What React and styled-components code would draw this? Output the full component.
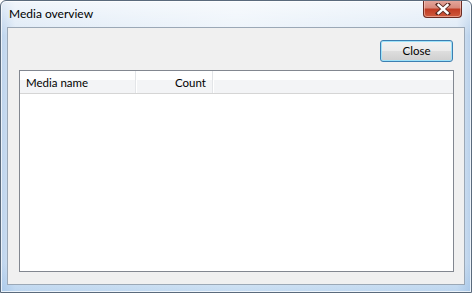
import React from "react";
import styled, { createGlobalStyle } from "styled-components";

const Global = createGlobalStyle`
  html, body { margin: 0; padding: 0; background: #ffffff; }
  body { font-family: Lato, "Noto Sans", sans-serif; }
`;

const Window = styled.div`
  box-sizing: border-box;
  width: 472px;
  height: 293px;
  display: flex;
  flex-direction: column;
  border: 1px solid #5a6a7c;
  border-radius: 6px 6px 0 0;
  background:
    linear-gradient(to bottom, rgba(255,255,255,0.6), rgba(255,255,255,0) 12%, rgba(255,255,255,0) 90%, rgba(150,190,230,0.45) 100%),
    linear-gradient(to right, #bcd3ec 0%, #dde9f6 3%, #ecf3fa 50%, #dde9f6 97%, #b8d0ea 100%);
  box-shadow: inset 0 0 0 1px rgba(255,255,255,0.7);
  overflow: hidden;
`;

const TitleBar = styled.div`
  height: 26px;
  display: flex;
  align-items: flex-start;
  padding-left: 8px;
`;

const Title = styled.div`
  margin-top: 5px;
  font-size: 12px;
  color: #000;
  line-height: 16px;
  flex: 1;
`;

const CloseX = styled.div`
  width: 39px;
  height: 18px;
  margin-top: -1px;
  margin-right: 9px;
  box-sizing: border-box;
  border: 1px solid #6b2b22;
  border-top: none;
  border-radius: 0 0 4px 4px;
  background: linear-gradient(to bottom, #e6a99f 0%, #d88a7c 45%, #c13c24 55%, #cf5b3e 100%);
  box-shadow: inset 0 0 0 1px rgba(255,220,210,0.5);
  display: flex;
  align-items: center;
  justify-content: center;
`;

const Client = styled.div`
  flex: 1;
  margin: 0 6px 7px 6px;
  border: 1px solid #9ba8b6;
  background: #f0f0f0;
  display: flex;
  flex-direction: column;
  padding: 12px 10px 12px 11px;
  min-height: 0;
`;

const ButtonRow = styled.div`
  display: flex;
  justify-content: flex-end;
  margin-bottom: 8px;
`;

const Button = styled.button`
  box-sizing: border-box;
  width: 73px;
  height: 22px;
  margin-right: 1px;
  padding: 0;
  border: 1px solid #3c7fb1;
  border-radius: 3px;
  background: linear-gradient(to bottom, #f2f2f2 0%, #ebebeb 48%, #dddddd 52%, #cfcfcf 100%);
  box-shadow: inset 0 0 0 1px #9ee2f9;
  font-family: Lato, "Noto Sans", sans-serif;
  font-size: 11.5px;
  color: #000;
  line-height: 18px;
`;

const ListView = styled.div`
  flex: 1;
  border: 1px solid #828790;
  background: #ffffff;
  display: flex;
  flex-direction: column;
`;

const Header = styled.div`
  display: flex;
  height: 22px;
  border-bottom: 1px solid #d5d5d5;
  background: linear-gradient(to bottom, #ffffff 0%, #ffffff 40%, #f3f4f6 42%, #f3f4f6 100%);
`;

const Column = styled.div`
  box-sizing: border-box;
  width: ${(p) => p.$w}px;
  flex: ${(p) => (p.$grow ? 1 : "none")};
  display: flex;
  align-items: center;
  justify-content: ${(p) => (p.$right ? "flex-end" : "flex-start")};
  padding: ${(p) => (p.$right ? "1px 6px 0 0" : "1px 0 0 6px")};
  border-right: ${(p) => (p.$grow ? "none" : "1px solid #e3e5e8")};
  box-shadow: ${(p) => (p.$grow ? "none" : "1px 0 0 #ffffff")};
  font-size: 11.5px;
  color: #000;
`;

export default function App() {
  return (
    <>
      <Global />
      <Window>
        <TitleBar>
          <Title>Media overview</Title>
          <CloseX>
            <svg width="16" height="12" viewBox="0 0 16 12">
              <path
                d="M3 1.5 L13 10.5 M13 1.5 L3 10.5"
                stroke="#5a2a22"
                strokeWidth="4.2"
                strokeLinecap="square"
                fill="none"
              />
              <path
                d="M3.5 2 L12.5 10 M12.5 2 L3.5 10"
                stroke="#ffffff"
                strokeWidth="2.4"
                strokeLinecap="square"
                fill="none"
              />
            </svg>
          </CloseX>
        </TitleBar>
        <Client>
          <ButtonRow>
            <Button>Close</Button>
          </ButtonRow>
          <ListView>
            <Header>
              <Column $w={116}>Media name</Column>
              <Column $w={77} $right>Count</Column>
              <Column $grow />
            </Header>
          </ListView>
        </Client>
      </Window>
    </>
  );
}
